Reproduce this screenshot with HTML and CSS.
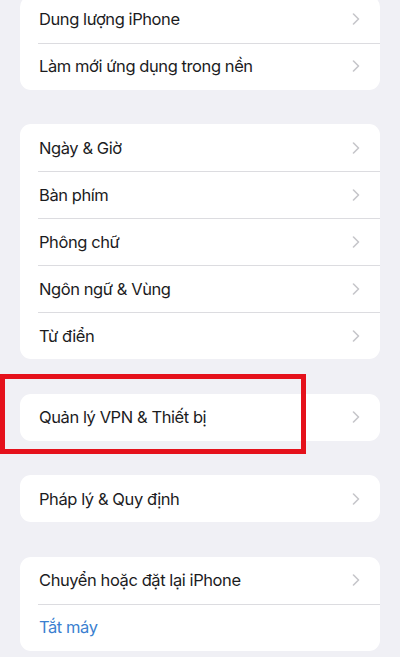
FILE: index.html
```html
<!DOCTYPE html>
<html lang="vi">
<head>
<meta charset="utf-8">
<title>Cài đặt chung</title>
<link rel="stylesheet" href="styles.css">
</head>
<body>
<main class="page">
  <section class="group group-first">
    <div class="row"><span class="label">Dung lượng iPhone</span><svg class="chev" viewBox="0 0 8 12"><path d="M1.5 1l5 5-5 5"/></svg></div>
    <div class="row"><span class="label">Làm mới ứng dụng trong nền</span><svg class="chev" viewBox="0 0 8 12"><path d="M1.5 1l5 5-5 5"/></svg></div>
  </section>

  <section class="group">
    <div class="row"><span class="label">Ngày &amp; Giờ</span><svg class="chev" viewBox="0 0 8 12"><path d="M1.5 1l5 5-5 5"/></svg></div>
    <div class="row"><span class="label">Bàn phím</span><svg class="chev" viewBox="0 0 8 12"><path d="M1.5 1l5 5-5 5"/></svg></div>
    <div class="row"><span class="label">Phông chữ</span><svg class="chev" viewBox="0 0 8 12"><path d="M1.5 1l5 5-5 5"/></svg></div>
    <div class="row"><span class="label">Ngôn ngữ &amp; Vùng</span><svg class="chev" viewBox="0 0 8 12"><path d="M1.5 1l5 5-5 5"/></svg></div>
    <div class="row"><span class="label">Từ điển</span><svg class="chev" viewBox="0 0 8 12"><path d="M1.5 1l5 5-5 5"/></svg></div>
  </section>

  <section class="group group-marked">
    <div class="row"><span class="label">Quản lý VPN &amp; Thiết bị</span><svg class="chev" viewBox="0 0 8 12"><path d="M1.5 1l5 5-5 5"/></svg></div>
    <div class="highlight"></div>
  </section>

  <section class="group">
    <div class="row"><span class="label">Pháp lý &amp; Quy định</span><svg class="chev" viewBox="0 0 8 12"><path d="M1.5 1l5 5-5 5"/></svg></div>
  </section>

  <section class="group">
    <div class="row"><span class="label">Chuyển hoặc đặt lại iPhone</span><svg class="chev" viewBox="0 0 8 12"><path d="M1.5 1l5 5-5 5"/></svg></div>
    <div class="row"><span class="label action">Tắt máy</span></div>
  </section>
</main>
</body>
</html>
```

FILE: styles.css
```css
* { box-sizing: border-box; }

html, body {
  margin: 0;
  padding: 0;
  background: #f0f0f5;
}

body {
  font-family: Inter, "Noto Sans", "Liberation Sans", sans-serif;
  color: #1c1c1e;
  overflow: hidden;
}

.page {
  display: flex;
  flex-direction: column;
  gap: 34.6px;
  padding: 0 20px;
}

.group {
  position: relative;
  background: #ffffff;
  border-radius: 11px;
}

.group-first {
  margin-top: -4.5px;
}

.row {
  position: relative;
  display: flex;
  align-items: center;
  justify-content: space-between;
  height: 47px;
  padding: 0 20px 0 19px;
}

.row + .row::before {
  content: "";
  position: absolute;
  top: 0;
  left: 18px;
  right: 0;
  height: 1px;
  background: #dcdce0;
}

.label {
  font-size: 16.5px;
  letter-spacing: -0.42px;
}

.action {
  color: #3a7fd0;
}

.chev {
  width: 8px;
  height: 12px;
  fill: none;
  stroke: #c6c6ca;
  stroke-width: 1.6;
  stroke-linecap: round;
  stroke-linejoin: round;
}

/* red annotation frame around the VPN row */
.highlight {
  position: absolute;
  left: -20px;
  top: -20px;
  width: 306px;
  height: 80px;
  border: 5px solid #e5111b;
  pointer-events: none;
}
```
